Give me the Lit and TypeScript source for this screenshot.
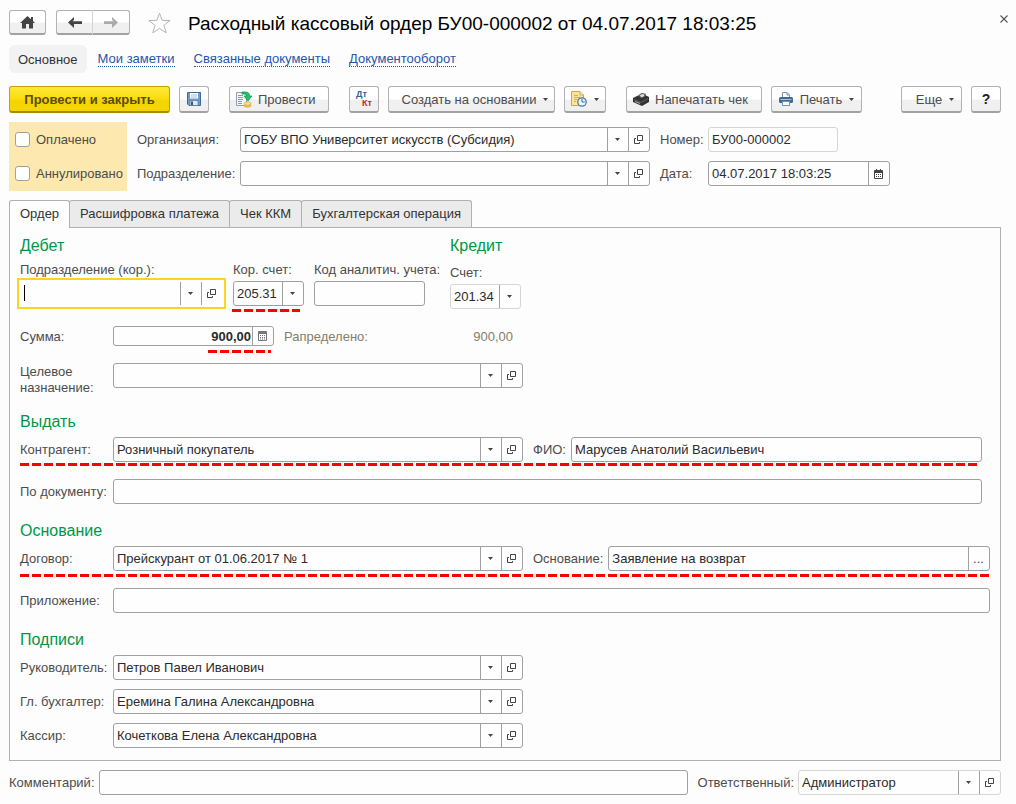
import { LitElement, html, css, svg, nothing, TemplateResult } from "lit";
import { customElement, state } from "lit/decorators.js";
import { classMap } from "lit/directives/class-map.js";

type Cell = "drop" | "open" | "calendar" | "calc" | "dots";

interface FieldOptions {
  id: string;
  value?: string;
  cells?: Cell[];
  size?: string;
  light?: boolean;
  focused?: boolean;
  mark?: string;
  label?: string;
}

const icon = (w: number, h: number, body: TemplateResult) =>
  html`<svg width=${w} height=${h} viewBox="0 0 ${w} ${h}" aria-hidden="true">${body}</svg>`;

const caretIcon = icon(5, 3, svg`<path d="M0 0h5L2.500 3z" fill="#444"/>`);

const homeIcon = icon(15, 13, svg`
  <path d="M7.500 0 0 7h2v5.500h4V8h3v4.500h4V7h2l-2-2V1h-2v2.200z" fill="#444"/>`);

const backIcon = icon(14, 11, svg`
  <path d="M6 0 0 5.500 6 11V7h8V4.200H4.500L6 3z" fill="#444"/>`);

const forwardIcon = icon(14, 11, svg`
  <path d="M8 0l6 5.500L8 11V7H0V4.200h9.500L8 3z" fill="#aaa"/>`);

const starIcon = icon(23, 22, svg`
  <path d="M11.500 1.200l2.700 7.200 7.900.1-6.200 4.800 2.300 7.500-6.700-4.400-6.700 4.400 2.300-7.500L.9 8.500l7.900-.1z"
    fill="#fff" stroke="#b4b4b4"/>`);

const closeIcon = icon(8, 8, svg`<path d="M.5.5l7 7M7.500.5l-7 7" stroke="#555" stroke-width="1.100"/>`);

const saveIcon = icon(16, 16, svg`
  <path d="M1.500 1.500h13v13H3l-1.500-1.500z" fill="#6f9cc9" stroke="#3d6a96"/>
  <rect x="4" y="2" width="8" height="5.500" fill="#fff"/>
  <path d="M5 4h6M5 6h6" stroke="#a9bccf"/>
  <rect x="4" y="9.500" width="8" height="5" fill="#dfe6ec" stroke="#3d6a96" stroke-width=".6"/>
  <rect x="5" y="10.500" width="2" height="3.500" fill="#35597d"/>`);

const postIcon = icon(16, 17, svg`
  <path d="M.5 1.500h10v13H.5z" fill="#f4f7f9" stroke="#8fa1b0"/>
  <path d="M2 4.500h5M2 6.500h5M2 8.500h5M2 10.500h4M2 12.500h4" stroke="#8b9aa8"/>
  <ellipse cx="11.500" cy="14.500" rx="3.500" ry="1.700" fill="#f3c94f" stroke="#c99a2c" stroke-width=".6"/>
  <ellipse cx="11.500" cy="12.600" rx="3.500" ry="1.700" fill="#ffe28a" stroke="#c99a2c" stroke-width=".6"/>
  <path d="M6 1h3.500c3 0 4 1.500 4 4H16l-4 5-4-5h2.500c0-1.500-1-2-4.500-2z" fill="#22c36b" stroke="#119048" stroke-width=".7"/>`);

const baseDocIcon = icon(16, 16, svg`
  <path d="M.5.500h8.500l3.500 3.500v10.500H.5z" fill="#fbe3a0" stroke="#cfa647"/>
  <path d="M9 .5V4h3.500" fill="#fff4cf" stroke="#cfa647"/>
  <path d="M3 4.500h4M3 6.500h6M3 8.500h3M3 10.500h2" stroke="#d2ad58"/>
  <circle cx="11" cy="11" r="4.200" fill="#edf5fb" stroke="#4b7ba8" stroke-width="1.300"/>
  <path d="M11 8v3h2.800" fill="none" stroke="#3d6a96"/>`);

const receiptIcon = icon(16, 13, svg`
  <path d="M0 5l5-2.500 2 1L12 2l4 2v5l-7 4-9-4z" fill="#333"/>
  <path d="M5 2.500L8.500 0 13 .8 12 4 8 5.500z" fill="#555"/>
  <path d="M6.500 2.500L9 1l2.500.5-.8 2-2.200.8z" fill="#ddd"/>
  <path d="M1 6.500l7 3 7-4" fill="none" stroke="#777" stroke-width=".7"/>
  <path d="M2 8.500l5 2" stroke="#bbb" stroke-width=".9"/>`);

const printIcon = icon(14, 14, svg`
  <path d="M3.500 5V.5h4.500l2.500 2.500v2" fill="#fff" stroke="#7795ae"/>
  <path d="M8 .5V3h2.500" fill="none" stroke="#7795ae"/>
  <rect x="0" y="5" width="14" height="6" rx="1.500" fill="#3f6b92"/>
  <path d="M1.500 7.500h11" stroke="#a9c3d8"/>
  <rect x="3.500" y="9.500" width="7" height="4" fill="#fff" stroke="#7795ae"/>`);

const cellIcons: Record<Cell, TemplateResult> = {
  drop: caretIcon,
  open: icon(9, 9, svg`
    <path d="M3.500.5h5v5h-5z" fill="none" stroke="#444"/>
    <path d="M2 3.500H.5v5h5V7" fill="none" stroke="#444"/>`),
  calendar: icon(9, 10, svg`
    <path d="M.5 1.500h8v8h-8z" fill="#fff" stroke="#444"/>
    <path d="M0 2.500h9M2.500 0v3M6.500 0v3" stroke="#444"/>
    <path d="M0 3.500h9" stroke="#444"/>
    <path d="M2 5.500h1m1 0h1m1 0h1M2 7.500h1m1 0h1m1 0h1" stroke="#444"/>`),
  calc: icon(9, 10, svg`
    <path d="M.5.5h8v9h-8z" fill="#fff" stroke="#777"/>
    <path d="M1 2h7" stroke="#777" stroke-width="2"/>
    <path d="M2 4.500h1m1 0h1m1 0h1M2 6.500h1m1 0h1m1 0h1M2 8h1m1 0h1m1 0h1" stroke="#777"/>`),
  dots: html`<span>...</span>`,
};

const cellNames: Record<Cell, string> = {
  drop: "Выбрать из списка",
  open: "Открыть",
  calendar: "Календарь",
  calc: "Калькулятор",
  dots: "Выбрать",
};

@customElement("app-root")
export class AppRoot extends LitElement {
  @state() private page = 0;

  static styles = css`
    :host {
      display: block;
      min-height: 100vh;
      box-sizing: border-box;
      padding: 10px 15px 8px 9px;
      background: #fdfdfd;
      color: #4c4c4c;
      font: 13px/15px "Liberation Sans", Arial, sans-serif;
    }
    * { box-sizing: border-box; }
    svg { display: block; flex: none; }
    button, input { font: inherit; color: inherit; margin: 0; padding: 0; }
    button { cursor: pointer; white-space: nowrap; }
    label { white-space: nowrap; }

    .titlebar { display: flex; align-items: center; height: 25px; margin-right: -7px; }
    h1 { flex: 1; margin: 0 0 0 17px; padding-top: 2px; font-size: 19px; line-height: 25px; font-weight: 400; color: #000; white-space: nowrap; }
    .push {
      display: flex; align-items: center; justify-content: center;
      border: 1px solid #b2b2b2; border-bottom: 2px solid #a2a2a2; border-radius: 3px;
      background: linear-gradient(#fff 50%, #f0f0f0 55%, #f0f0f0);
    }
    .titlebar .push { height: 25px; width: 37px; }
    .history { display: flex; margin: 0 18px 0 10px; }
    .history .push:first-child { border-radius: 3px 0 0 3px; border-right-color: #d4d4d4; }
    .history .push:last-child { border-radius: 0 3px 3px 0; border-left: 0; }
    .plain { display: flex; align-items: center; justify-content: center; border: 0; background: none; }
    .close { align-self: flex-start; margin-top: 5px; }

    .links { display: flex; align-items: center; gap: 19px; height: 28px; margin-top: 10px; }
    .links .current { padding: 7px 9px 6px; margin-right: -8px; border-radius: 6px; background: #f2f2f2; color: #333; }
    .links a { color: #2457ab; text-decoration: none; border-bottom: 1px dotted #2457ab; line-height: 14px; margin-top: 1px; }

    .toolbar { display: flex; gap: 9px; margin-top: 13px; }
    .toolbar .push { height: 27px; min-width: 30px; padding: 0 6px; gap: 7px; }
    .toolbar .menu { padding: 0 6px 0 13px; }
    .toolbar .labelled { justify-content: flex-start; gap: 6px; padding: 0 6px; }
    .toolbar .primary {
      min-width: 161px; font-weight: 700; color: #5a4a14;
      border-color: #c4a000; border-bottom-color: #a88a00;
      background: linear-gradient(#ffe83a, #fbdc0c 50%, #f5d500 55%, #f5d500);
    }
    .set { margin-left: 11px; }
    .w-post { width: 100px; }
    .w-create { width: 167px; }
    .w-linked { width: 42px; }
    .w-receipt { width: 136px; }
    .w-print { width: 91px; }
    .w-more { width: 61px; margin-left: auto; }
    .help { font-weight: 700; font-size: 14px; color: #222; }
    .entry { display: grid; font-size: 9px; line-height: 9px; font-weight: 700; }
    .entry .dt { color: #2f6690; text-align: left; }
    .entry .kt { color: #c4261d; padding-left: 6px; }

    .head { display: flex; align-items: flex-start; gap: 10px; margin-top: 9px; }
    .flags { display: grid; gap: 19px; width: 118px; height: 69px; padding: 10px 0 0 6px; align-content: start; background: #fde8b0; }
    .flags label { display: flex; align-items: center; gap: 6px; }
    .flags input { appearance: none; width: 15px; height: 15px; border: 1px solid #a0a0a0; border-radius: 3px; background: #fff; }
    .props { flex: 1; display: grid; grid-template-columns: 103px minmax(0, 410px) 58px minmax(0, 182px); row-gap: 9px; align-items: center; padding-top: 5px; }
    .props .second { padding-left: 10px; }

    .box {
      display: flex; height: 25px; min-width: 0; position: relative;
      border: 1px solid #a0a0a0; border-radius: 3px; background: #fefefe;
    }
    .box input { flex: 1; min-width: 0; width: 0; border: 0; outline: 0; padding: 0 3px; background: transparent; color: #2b2b2b; }
    .box .cell {
      display: flex; align-items: center; justify-content: center; flex: none;
      width: 21px; padding-right: 1px; border: 0; border-left: 1px solid #a0a0a0; background: none;
    }
    .light { border-color: #d6d6d6; }
    .focused { border-color: transparent; border-radius: 0; outline: 2px solid #fbd41d; outline-offset: 1px; }
    .focused::before { content: ""; width: 1px; margin: 3px 0 4px 3px; background: #000; }
    .w130 { width: 130px; }
    .w203 { width: 203px; }
    .w71 { width: 71px; }
    .w111 { width: 111px; }
    .w410 { flex: 0 1 410px; }
    .grow { flex: 1; }
    .amount { width: 161px; height: 20px; }
    .amount input { text-align: right; font-weight: 700; padding-right: 1px; }

    .tabs { display: flex; margin-top: 9px; position: relative; }
    .tabs button {
      height: 27px; padding: 0 10px 2px; margin-right: -1px;
      border: 1px solid #b0b0b0; border-bottom: 0; border-radius: 3px 3px 0 0;
      background: #ebebeb; color: #333;
    }
    .tabs .on { height: 28px; margin-bottom: -1px; padding-bottom: 3px; background: #fdfdfd; }

    .panel { display: grid; gap: 17px; padding: 8px 10px 12px; border: 1px solid #b0b0b0; }
    h2 { margin: 0 0 5px; font-size: 16px; line-height: 20px; font-weight: 400; color: #009646; }
    .accounts { display: flex; align-items: flex-start; gap: 10px; }
    .accounts h2 { margin-bottom: 6px; }
    .accounts .credit h2 { margin-bottom: 9px; }
    .stack { display: grid; gap: 4px; }
    .debit { display: flex; gap: 10px; }
    .analytic { width: 126px; }
    .row { display: flex; align-items: center; position: relative; }
    .row > label:first-child { width: 93px; flex: none; }
    .row.tall { align-items: flex-start; height: 32px; }
    .row.tall label { line-height: 16px; padding-top: 1px; white-space: normal; }
    .row .next { margin: 0 5px 0 10px; }
    .inset { margin-right: 8px; }
    .spread { display: flex; justify-content: space-between; width: 229px; margin-left: 10px; color: #857d69; }
    .signs { display: grid; gap: 9px; }

    .mark::after {
      content: ""; position: absolute; left: 0; right: 0; top: calc(100% + 3px); height: 3px;
      background: repeating-linear-gradient(90deg, #f00 0 9px, transparent 9px 12px);
      pointer-events: none;
    }
    .mark.near::after { right: 2px; top: calc(100% + 1px); }
    .box.mark::after { left: -2px; right: 3px; top: calc(100% + 4px); }
    .box.tail::after { left: 94px; right: 2px; top: calc(100% + 5px); }

    .foot { display: flex; align-items: center; margin-top: 9px; }
    .foot label { margin-right: 4px; }
    .foot .box + label { margin-left: 10px; }
  `;

  private field(o: FieldOptions) {
    const cls = ["box", o.size ?? "", o.light ? "light" : "", o.focused ? "focused" : "", o.mark ?? ""].join(" ");
    return html`<div class=${cls}>
      <input id=${o.id} type="text" .value=${o.value ?? ""} aria-label=${o.label ?? nothing} />
      ${(o.cells ?? []).map(
        (c) => html`<button class="cell" type="button" aria-label=${cellNames[c]}>${cellIcons[c]}</button>`
      )}
    </div>`;
  }

  private person(id: string, label: string, value: string) {
    return html`<div class="row">
      <label for=${id}>${label}</label>
      ${this.field({ id, value, cells: ["drop", "open"], size: "w410" })}
    </div>`;
  }

  render() {
    const tabs = ["Ордер", "Расшифровка платежа", "Чек ККМ", "Бухгалтерская операция"];
    return html`
      <header class="titlebar">
        <button class="push" aria-label="Домой">${homeIcon}</button>
        <div class="history">
          <button class="push" aria-label="Назад">${backIcon}</button>
          <button class="push" aria-label="Вперед">${forwardIcon}</button>
        </div>
        <button class="plain" aria-label="В избранное">${starIcon}</button>
        <h1>Расходный кассовый ордер БУ00-000002 от 04.07.2017 18:03:25</h1>
        <button class="plain close" aria-label="Закрыть">${closeIcon}</button>
      </header>

      <nav class="links">
        <span class="current">Основное</span>
        <a href="#notes">Мои заметки</a>
        <a href="#related">Связанные документы</a>
        <a href="#workflow">Документооборот</a>
      </nav>

      <div class="toolbar">
        <button class="push primary">Провести и закрыть</button>
        <button class="push" aria-label="Записать">${saveIcon}</button>
        <button class="push set labelled w-post">${postIcon}<span>Провести</span></button>
        <button class="push set" aria-label="Дт Кт">
          <span class="entry"><span class="dt">Дт</span><span class="kt">Кт</span></span>
        </button>
        <button class="push menu w-create"><span>Создать на основании</span>${caretIcon}</button>
        <button class="push w-linked" aria-label="Связанные">${baseDocIcon}${caretIcon}</button>
        <button class="push set labelled w-receipt">${receiptIcon}<span>Напечатать чек</span></button>
        <button class="push w-print">${printIcon}<span>Печать</span>${caretIcon}</button>
        <button class="push menu w-more"><span>Еще</span>${caretIcon}</button>
        <button class="push help">?</button>
      </div>

      <section class="head">
        <div class="flags">
          <label><input type="checkbox" />Оплачено</label>
          <label><input type="checkbox" />Аннулировано</label>
        </div>
        <div class="props">
          <label for="org">Организация:</label>
          ${this.field({ id: "org", value: "ГОБУ ВПО Университет искусств (Субсидия)", cells: ["drop", "open"] })}
          <label class="second" for="number">Номер:</label>
          <div>${this.field({ id: "number", value: "БУ00-000002", light: true, size: "w130" })}</div>
          <label for="unit">Подразделение:</label>
          ${this.field({ id: "unit", cells: ["drop", "open"] })}
          <label class="second" for="date">Дата:</label>
          ${this.field({ id: "date", value: "04.07.2017 18:03:25", cells: ["calendar"] })}
        </div>
      </section>

      <div class="tabs" role="tablist">
        ${tabs.map(
          (t, i) => html`<button
            role="tab"
            aria-selected=${i === this.page}
            class=${classMap({ on: i === this.page })}
            @click=${() => (this.page = i)}
          >${t}</button>`
        )}
      </div>

      <main class="panel">
        <div class="accounts">
          <div>
            <h2>Дебет</h2>
            <div class="debit">
              <div class="stack">
                <label for="cor-unit">Подразделение (кор.):</label>
                ${this.field({ id: "cor-unit", cells: ["drop", "open"], size: "w203", focused: true })}
              </div>
              <div class="stack">
                <label for="cor-account">Кор. счет:</label>
                ${this.field({ id: "cor-account", value: "205.31", cells: ["drop"], size: "w71", mark: "mark" })}
              </div>
              <div class="stack analytic">
                <label for="code">Код аналитич. учета:</label>
                ${this.field({ id: "code", size: "w111" })}
              </div>
            </div>
          </div>
          <div class="credit">
            <h2>Кредит</h2>
            <div class="stack">
              <label for="account">Счет:</label>
              ${this.field({ id: "account", value: "201.34", cells: ["drop"], size: "w71", light: true })}
            </div>
          </div>
        </div>

        <div class="row">
          <label for="sum">Сумма:</label>
          ${this.field({ id: "sum", value: "900,00", cells: ["calc"], size: "amount", mark: "mark tail" })}
          <div class="spread"><span>Рапределено:</span><span>900,00</span></div>
        </div>

        <div class="row tall">
          <label for="purpose">Целевое назначение:</label>
          ${this.field({ id: "purpose", cells: ["drop", "open"], size: "w410" })}
        </div>

        <div>
          <h2>Выдать</h2>
          <div class="row mark near inset">
            <label for="partner">Контрагент:</label>
            ${this.field({ id: "partner", value: "Розничный покупатель", cells: ["drop", "open"], size: "w410" })}
            <label class="next" for="name">ФИО:</label>
            ${this.field({ id: "name", value: "Марусев Анатолий Васильевич", size: "grow" })}
          </div>
        </div>

        <div class="row inset">
          <label for="by-doc">По документу:</label>
          ${this.field({ id: "by-doc", size: "grow" })}
        </div>

        <div>
          <h2>Основание</h2>
          <div class="row mark">
            <label for="contract">Договор:</label>
            ${this.field({ id: "contract", value: "Прейскурант от 01.06.2017 № 1", cells: ["drop", "open"], size: "w410" })}
            <label class="next" for="reason">Основание:</label>
            ${this.field({ id: "reason", value: "Заявление на возврат", cells: ["dots"], size: "grow" })}
          </div>
        </div>

        <div class="row">
          <label for="attachment">Приложение:</label>
          ${this.field({ id: "attachment", size: "grow" })}
        </div>

        <div>
          <h2>Подписи</h2>
          <div class="signs">
            ${this.person("head", "Руководитель:", "Петров Павел Иванович")}
            ${this.person("chief", "Гл. бухгалтер:", "Еремина Галина Александровна")}
            ${this.person("cashier", "Кассир:", "Кочеткова Елена Александровна")}
          </div>
        </div>
      </main>

      <footer class="foot">
        <label for="comment">Комментарий:</label>
        ${this.field({ id: "comment", size: "grow" })}
        <label for="owner">Ответственный:</label>
        ${this.field({ id: "owner", value: "Администратор", cells: ["drop", "open"], size: "w203", light: true })}
      </footer>
    `;
  }
}
